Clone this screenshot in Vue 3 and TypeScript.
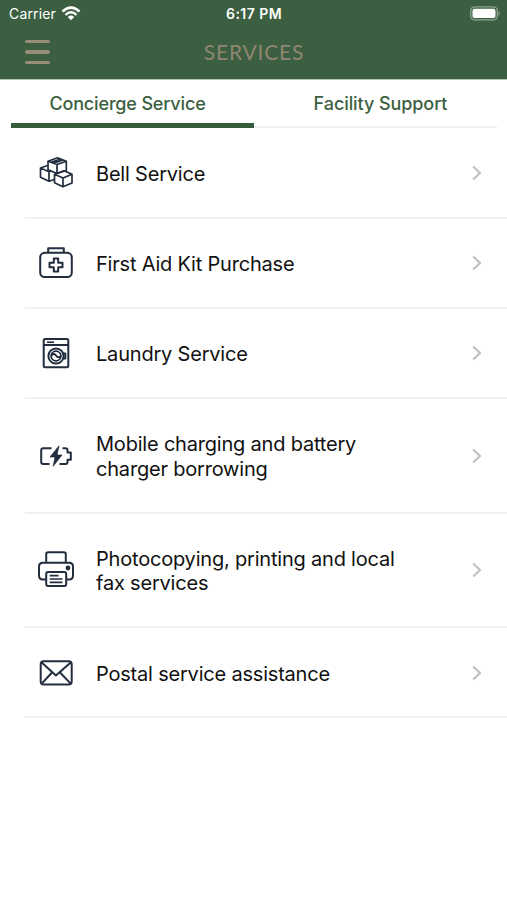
<script setup lang="ts">
import { ref } from 'vue'

interface Service {
  icon: string
  lines: string[]
  tall?: boolean
}

const tabs: string[] = ['Concierge Service', 'Facility Support']
const activeTab = ref(0)

const services: Service[] = [
  { icon: 'boxes', lines: ['Bell Service'] },
  { icon: 'aid', lines: ['First Aid Kit Purchase'] },
  { icon: 'laundry', lines: ['Laundry Service'] },
  { icon: 'battery', lines: ['Mobile charging and battery', 'charger borrowing'], tall: true },
  { icon: 'printer', lines: ['Photocopying, printing and local', 'fax services'], tall: true },
  { icon: 'mail', lines: ['Postal service assistance'] },
]
</script>

<template>
  <div class="screen">
    <header class="header">
      <div class="status">
        <div class="carrier">
          <span>Carrier</span>
          <svg class="wifi" width="20" height="15" viewBox="0 0 20 15">
            <g fill="none" stroke="#fff" stroke-width="2.5">
              <path d="M1.5 5.5Q10 -2.2 18.5 5.5" />
              <path d="M4.5 8.8Q10 3.7 15.5 8.8" />
            </g>
            <path d="M6.8 11Q10 8.2 13.2 11L10 14.3Z" fill="#fff" />
          </svg>
        </div>
        <span class="clock">6:17 PM</span>
        <svg class="power" width="31" height="15" viewBox="0 0 31 15">
          <rect x=".7" y=".9" width="26.6" height="13" rx="4" fill="none" stroke="#8fa592" stroke-width="1.3" />
          <rect x="2.5" y="2.7" width="23" height="9.4" rx="2.2" fill="#fff" />
          <path d="M28.6 5Q31.2 7.4 28.6 9.8Z" fill="#8fa592" />
        </svg>
      </div>
      <div class="navbar">
        <button class="menu" aria-label="Menu"><i></i><i></i><i></i></button>
        <h1>SERVICES</h1>
      </div>
    </header>

    <nav class="tabs">
      <button
        v-for="(tab, i) in tabs"
        :key="tab"
        class="tab"
        :class="{ active: i === activeTab }"
        @click="activeTab = i"
      >{{ tab }}</button>
    </nav>

    <ul class="list">
      <li v-for="s in services" :key="s.icon" class="row" :class="{ tall: s.tall }">
        <svg class="icon" width="38" height="38" viewBox="0 0 38 38">
          <g v-if="s.icon === 'boxes'" stroke-width="1.7">
            <path d="M11 7.2L20.5 3.8L29.3 7.2V16.5L20 19.5L11 15.8ZM11 7.2L20 10.5L29.3 7.2M20 10.5V19.5M14.2 8.4L23.6 5M16.8 9.3L26 6" />
            <path d="M10.5 11.5L3.5 14V23.3L12 27.3L17.5 25.5M3.5 14L12 17.8L15 17M12 17.8V27.3" />
            <path d="M17.5 20.3L27 16.8L35 20.3V29L26 32.8L17.5 28.8ZM17.5 20.3L26 24L35 20.3M26 24V32.8" />
          </g>
          <g v-else-if="s.icon === 'aid'" stroke-width="2">
            <rect x="3.2" y="8.8" width="31.6" height="24.2" rx="4.5" />
            <path d="M11.2 8V4.2H26.8V8" />
            <path d="M16.8 14.5H21.2V18.8H25.5V23.2H21.2V27.5H16.8V23.2H12.5V18.8H16.8Z" />
          </g>
          <g v-else-if="s.icon === 'laundry'" stroke-width="2">
            <rect x="6.7" y="5" width="24.6" height="28.2" rx="1.5" />
            <path d="M6.7 11H31.3" />
            <path d="M10 8.2H17" stroke-width="1.6" />
            <circle cx="19" cy="22" r="7.6" />
            <circle cx="19" cy="22" r="4.9" stroke-width="1.8" />
            <path d="M14.5 21.2Q17 18.8 19 21.5T23.4 22.7" />
            <path d="M25.5 19.5H28.3V24.5H25.5" />
          </g>
          <g v-else-if="s.icon === 'battery'" stroke-width="2">
            <path d="M14.5 11.2H6.2Q4.2 11.2 4.2 13.2V25Q4.2 27 6.2 27H12.5M25.5 11.2H28.5Q30.5 11.2 30.5 13.2V15.5H33.8V22.8H30.5V25Q30.5 27 28.5 27H22.5" />
            <path d="M22 8.8L13 20H18L16.2 29.3L25 18H20Z" fill="#222d3e" stroke-width=".7" />
          </g>
          <g v-else-if="s.icon === 'printer'" stroke-width="2">
            <path d="M9.2 12V3.2Q9.2 1.2 11.2 1.2H26.8Q28.8 1.2 28.8 3.2V12" />
            <path d="M9.5 28.5H6Q2 28.5 2 24.5V15.7Q2 11.7 6 11.7H32Q36 11.7 36 15.7V24.5Q36 28.5 32 28.5H29" />
            <rect x="9.2" y="21" width="20" height="14" rx="2" />
            <path d="M12.7 24.7H21.5M12.7 28H25.5M12.7 31.3H25.5" stroke-width="1.7" />
            <circle cx="31" cy="17" r="1.4" fill="#222d3e" />
          </g>
          <g v-else stroke-width="2">
            <rect x="3.7" y="7.3" width="31" height="23.2" rx="3" />
            <path d="M4.7 8.5L18.9 21.5L33.7 8.5M4.7 29.6L15.2 18.3M33.7 29.6L22.8 18.3" />
          </g>
        </svg>
        <div class="label">
          <span v-for="line in s.lines" :key="line">{{ line }}</span>
        </div>
        <svg class="chevron" width="12" height="18" viewBox="0 0 12 18">
          <path d="M2.2 2.5L9 9L2.2 15.5" fill="none" stroke="#c2c2c4" stroke-width="2.2" />
        </svg>
      </li>
    </ul>
  </div>
</template>

<style>
body {
  margin: 0;
  background: #fff;
}
</style>

<style scoped>
.screen {
  width: 507px;
  height: 900px;
  overflow: hidden;
  background: #fff;
  font-family: Inter, 'Liberation Sans', sans-serif;
}
.header {
  height: 80px;
  background: #3c5f41;
  border-bottom: 1px solid #b5c8b7;
  box-sizing: border-box;
}
.status {
  display: grid;
  grid-template-columns: 1fr auto 1fr;
  align-items: center;
  height: 27px;
  padding: 0 6px 0 9px;
  color: #fff;
  font-size: 14px;
}
.carrier {
  display: flex;
  align-items: center;
  gap: 5px;
  letter-spacing: 0.15px;
}
.wifi {
  margin-top: -1px;
}
.clock {
  padding-left: 1px;
  margin-right: 3px;
  font-weight: 600;
  font-size: 14px;
  letter-spacing: 0.45px;
}
.power {
  justify-self: end;
}
.navbar {
  display: grid;
  grid-template-columns: 1fr auto 1fr;
  align-items: center;
  height: 50px;
}
.menu {
  display: flex;
  flex-direction: column;
  gap: 7px;
  width: 25px;
  margin: 0 0 0 25px;
  padding: 0;
  border: 0;
  background: none;
}
.menu i {
  height: 3.5px;
  border-radius: 2px;
  background: #988d78;
}
h1 {
  margin: 0;
  padding: 0 0 2px 1px;
  color: #8f8672;
  font-family: Lato, sans-serif;
  font-size: 21px;
  font-weight: 400;
  letter-spacing: 0.8px;
}
.tabs {
  display: grid;
  grid-template: 48px / 243px 243px;
  height: 48px;
  padding: 0 10px 0 11px;
}
.tab {
  display: flex;
  justify-content: center;
  align-items: flex-start;
  box-sizing: border-box;
  padding: 5px 0 0;
  border: 0;
  border-bottom: 2px solid #f1f1f1;
  background: none;
  color: #3c5f41;
  font: 500 18px/38px Inter, sans-serif;
  letter-spacing: -0.16px;
}
.tab:last-child {
  padding-left: 10px;
  letter-spacing: -0.08px;
}
.tab.active {
  padding-right: 10px;
  border-bottom: 5px solid #355b3b;
}
.list {
  margin: 0;
  padding: 1px 0 0 25px;
  list-style: none;
}
.row {
  display: flex;
  align-items: center;
  box-sizing: border-box;
  height: 90px;
  padding: 0 24px 0 12px;
  border-bottom: 2px solid #f1f1f2;
}
.row.tall {
  height: 114.5px;
  padding-top: 1px;
}
.row:last-child {
  padding-top: 2px;
}
.icon {
  flex: none;
  fill: none;
  stroke: #222d3e;
  stroke-linejoin: round;
}
.label {
  display: flex;
  flex: 1;
  flex-direction: column;
  margin-left: 21px;
  padding-top: 2px;
  color: #111;
  font-size: 20px;
  line-height: 24.5px;
  letter-spacing: -0.2px;
  white-space: nowrap;
}
.chevron {
  flex: none;
}
</style>
